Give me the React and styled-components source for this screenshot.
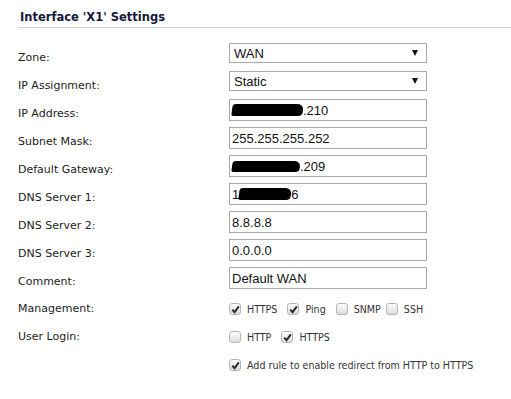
import React from "react";
import styled, { createGlobalStyle } from "styled-components";

const GlobalStyle = createGlobalStyle`
  html, body {
    margin: 0;
    padding: 0;
    background: #fff;
  }
  body {
    font-family: "DejaVu Sans", Tahoma, sans-serif;
  }
`;

const Page = styled.div`
  width: 511px;
  height: 399px;
  overflow: hidden;
  padding: 11px 0 0 18px;
  box-sizing: border-box;
`;

const SectionTitle = styled.h2`
  margin: 0;
  padding: 0 0 4px 2px;
  font-family: "DejaVu Sans", Tahoma, sans-serif;
  font-size: 11.5px;
  letter-spacing: 0;
  font-weight: bold;
  color: #15183a;
  border-bottom: 1px solid #c9d5de;
  line-height: 12px;
`;

const Form = styled.div`
  display: grid;
  grid-template-columns: 211px 198px;
  grid-auto-rows: 28px;
  margin-top: 11px;
`;

const Label = styled.div`
  font-size: 11px;
  color: #1c1c1c;
  padding-top: ${(p) => (p.$check ? 11 : 12)}px;
  line-height: 13px;
  white-space: nowrap;
`;

const Control = styled.div`
  padding-top: 4px;
`;

const Select = styled.div`
  height: 20px;
  box-sizing: border-box;
  border: 1px solid #a9a9a9;
  display: flex;
  align-items: center;
  justify-content: space-between;
  padding: 0 8px 0 4px;
  font-family: "Liberation Sans", Arial, sans-serif;
  font-size: 13px;
  color: #111;
`;

const Arrow = styled.span`
  width: 0;
  height: 0;
  border-left: 3.5px solid transparent;
  border-right: 3.5px solid transparent;
  border-top: 6px solid #111;
`;

const Input = styled.div`
  height: 22px;
  box-sizing: border-box;
  border: 1px solid #a9a9a9;
  display: flex;
  align-items: center;
  padding: 0 2px;
  font-family: "Liberation Sans", Arial, sans-serif;
  font-size: 13px;
  color: #111;
  white-space: nowrap;
`;

const Redact = styled.span`
  display: inline-block;
  width: ${(p) => p.$w}px;
  height: ${(p) => p.$h || 11}px;
  background: #000;
  border-radius: 3px 6px 4px 2px;
  transform: skewX(-8deg);
`;

const CheckRow = styled.div`
  display: flex;
  align-items: center;
  padding-top: 11px;
  height: 14px;
  font-family: "DejaVu Sans Condensed", "DejaVu Sans", Tahoma, sans-serif;
  font-stretch: condensed;
  font-size: 10.6px;
  color: #333;
  white-space: nowrap;
`;

const CheckItem = styled.label`
  display: flex;
  align-items: center;
  margin-right: ${(p) => p.$gap ?? 10}px;
`;

const Box = styled.span`
  width: 12px;
  height: 12px;
  box-sizing: border-box;
  border: 1px solid #b5b5b5;
  border-radius: 3px;
  background: linear-gradient(#fdfdfd, #dcdcdc);
  display: inline-flex;
  align-items: center;
  justify-content: center;
  margin-right: 6px;
  flex: none;
`;

function Check({ on, children, gap }) {
  return (
    <CheckItem $gap={gap}>
      <Box>
        {on && (
          <svg width="9" height="9" viewBox="0 0 9 9">
            <path d="M1.2 4.6 L3.6 7.2 L7.8 1.4" fill="none" stroke="#2b2b2b" strokeWidth="2" />
          </svg>
        )}
      </Box>
      {children}
    </CheckItem>
  );
}

export default function App() {
  return (
    <>
      <GlobalStyle />
      <Page>
        <SectionTitle>Interface 'X1' Settings</SectionTitle>
        <Form>
          <Label>Zone:</Label>
          <Control>
            <Select>WAN<Arrow /></Select>
          </Control>

          <Label>IP Assignment:</Label>
          <Control>
            <Select>Static<Arrow /></Select>
          </Control>

          <Label>IP Address:</Label>
          <Control>
            <Input><Redact $w={71} $h={12} />.210</Input>
          </Control>

          <Label>Subnet Mask:</Label>
          <Control>
            <Input>255.255.255.252</Input>
          </Control>

          <Label>Default Gateway:</Label>
          <Control>
            <Input><Redact $w={68} $h={11} />.209</Input>
          </Control>

          <Label>DNS Server 1:</Label>
          <Control>
            <Input>1<Redact $w={52} $h={12} />6</Input>
          </Control>

          <Label>DNS Server 2:</Label>
          <Control>
            <Input>8.8.8.8</Input>
          </Control>

          <Label>DNS Server 3:</Label>
          <Control>
            <Input>0.0.0.0</Input>
          </Control>

          <Label>Comment:</Label>
          <Control>
            <Input>Default WAN</Input>
          </Control>

          <Label $check>Management:</Label>
          <CheckRow>
            <Check on>HTTPS</Check>
            <Check on>Ping</Check>
            <Check gap={5}>SNMP</Check>
            <Check>SSH</Check>
          </CheckRow>

          <Label $check>User Login:</Label>
          <CheckRow>
            <Check>HTTP</Check>
            <Check on>HTTPS</Check>
          </CheckRow>

          <Label $check></Label>
          <CheckRow>
            <Check on>Add rule to enable redirect from HTTP to HTTPS</Check>
          </CheckRow>
        </Form>
      </Page>
    </>
  );
}
